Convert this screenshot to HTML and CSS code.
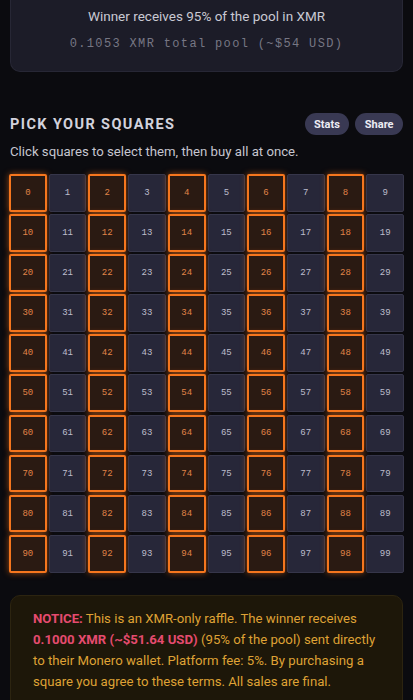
FILE: index.html
```html
<!DOCTYPE html>
<html>
<head>
<meta charset="utf-8">
<link rel="stylesheet" href="styles.css">
</head>
<body>
<div class="pool-card">
  <div class="pool-line">Winner receives 95% of the pool in XMR</div>
  <div class="pool-mono">0.1053 XMR total pool (~$54 USD)</div>
</div>
<div class="section-head">
  <h2 class="title">PICK YOUR SQUARES</h2>
  <div class="actions">
    <button class="pill">Stats</button>
    <button class="pill">Share</button>
  </div>
</div>
<p class="subtitle">Click squares to select them, then buy all at once.</p>
<div class="grid" id="grid"></div>
<div class="notice">
  <span class="hot">NOTICE:</span> This is an XMR-only raffle. The winner receives <span class="hot">0.1000 XMR (~$51.64 USD)</span> (95% of the pool) sent directly to their Monero wallet. Platform fee: 5%. By purchasing a square you agree to these terms. All sales are final.
</div>
<script>
  var g = document.getElementById('grid');
  for (var i = 0; i < 100; i++) {
    var d = document.createElement('div');
    d.className = 'cell' + ((i % 2 === 0) ? ' sel' : '');
    d.textContent = i;
    g.appendChild(d);
  }
</script>
</body>
</html>
```
FILE: styles.css
```css
html, body {
  margin: 0;
  padding: 0;
  background: #0b0b0f;
  font-family: Roboto, "Liberation Sans", sans-serif;
}
.pool-card {
  margin: -1px 10px 0;
  background: #1c1c28;
  border: 1px solid #272735;
  border-top: none;
  border-radius: 0 0 10px 10px;
  padding: 7px 0 18px;
  text-align: center;
}
.pool-line {
  font-size: 13.5px;
  line-height: 20px;
  color: #c9c9d3;
}
.pool-mono {
  margin-top: 9px;
  font-family: "Liberation Mono", monospace;
  font-size: 12px;
  letter-spacing: 1.35px;
  line-height: 18px;
  color: #777784;
}
.section-head {
  margin: 41px 10px 0 10px;
  display: flex;
  align-items: center;
  justify-content: space-between;
  height: 22px;
}
.title {
  margin: 0;
  font-size: 14.5px;
  font-weight: 700;
  letter-spacing: 1.4px;
  color: #d2d2dc;
}
.actions {
  display: flex;
  gap: 6px;
}
.pill {
  border: none;
  background: #393953;
  color: #ececf4;
  font-family: Roboto, "Liberation Sans", sans-serif;
  font-weight: 700;
  font-size: 11px;
  height: 22px;
  padding: 0 9.5px;
  border-radius: 11px;
}
.subtitle {
  margin: 8px 10px 0;
  font-size: 13.2px;
  line-height: 18px;
  color: #c6c6d0;
}
.grid {
  margin: 13px 9px 0;
  display: grid;
  grid-template-columns: repeat(10, 1fr);
  column-gap: 2px;
  row-gap: 2.4px;
}
.cell {
  aspect-ratio: 1;
  box-sizing: border-box;
  display: flex;
  align-items: center;
  justify-content: center;
  font-family: "Liberation Mono", monospace;
  font-size: 9px;
  background: #272739;
  border: 1px solid #36364a;
  border-radius: 2px;
  color: #bdbdcc;
}
.cell.sel {
  background: #2a1a12;
  border: 2px solid #f5761e;
  color: #e08448;
  box-shadow: 0 0 6px rgba(249, 115, 22, 0.6);
}
.notice {
  margin: 22px 10px 0;
  background: #1d1709;
  border: 1px solid #2c2410;
  border-radius: 10px;
  padding: 12px 20px 16px 22px;
  font-size: 13.2px;
  line-height: 21.3px;
  color: #dfa235;
}
.hot {
  color: #e54b6f;
  font-weight: 700;
}
```
